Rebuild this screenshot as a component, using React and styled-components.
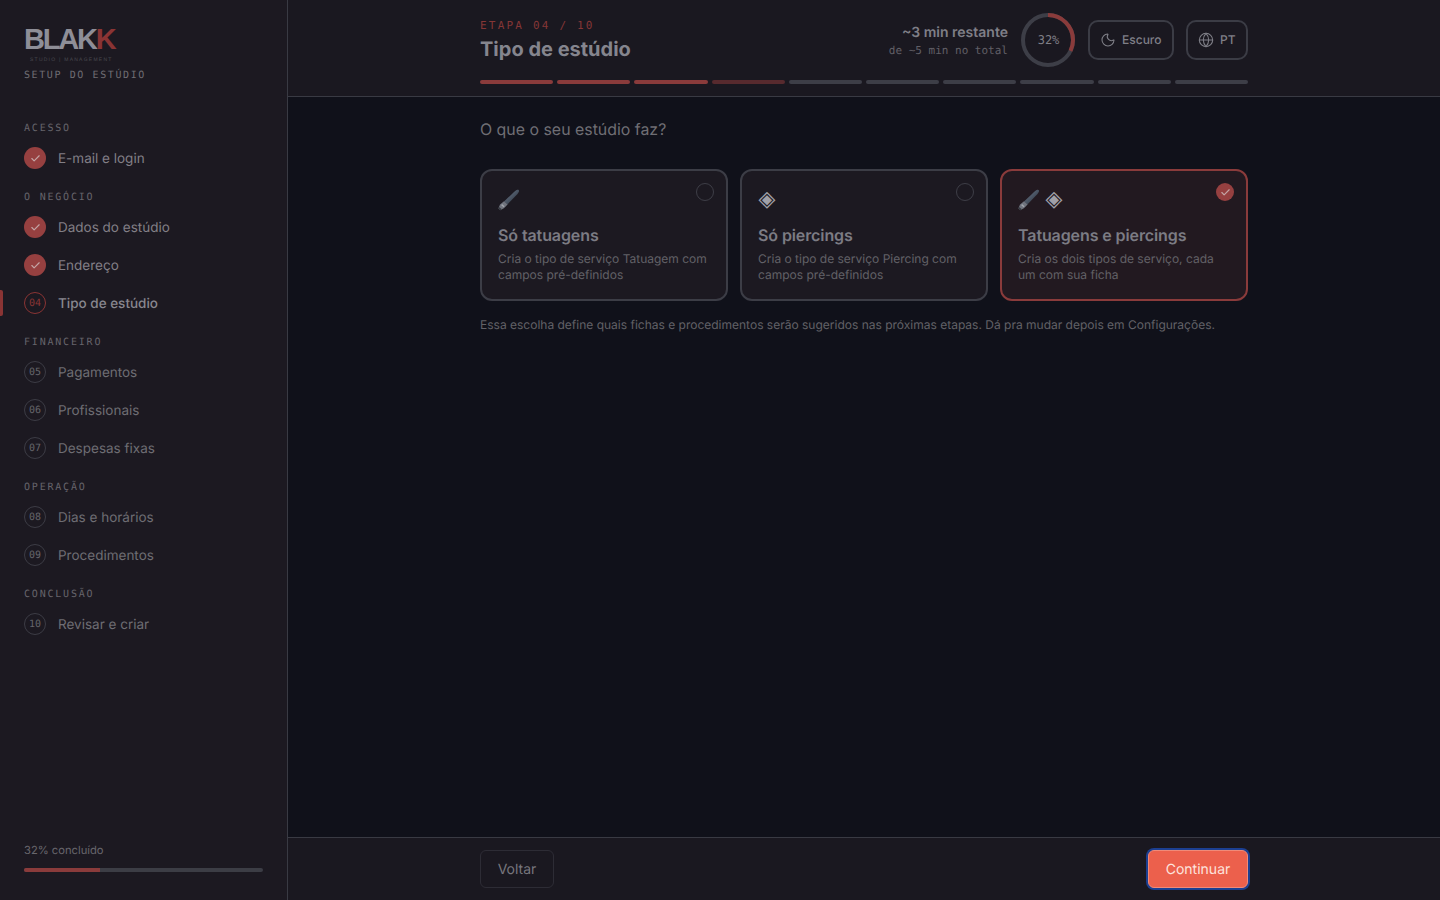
import React from "react";
import styled, { createGlobalStyle } from "styled-components";
import { Moon, Globe, Check } from "lucide-react";

const mono = `"DejaVu Sans Mono", "Liberation Mono", monospace`;

const GlobalStyle = createGlobalStyle`
  html, body { margin: 0; padding: 0; background: #10111a; }
  * { box-sizing: border-box; }
  body {
    font-family: Inter, "Noto Sans", sans-serif;
    text-rendering: geometricPrecision;
  }
`;

const Shell = styled.div`
  display: grid;
  grid-template-columns: 288px 1fr;
  height: 900px;
  overflow: hidden;
`;

const Sidebar = styled.aside`
  background: #1c1921;
  border-right: 1px solid #393a43;
  padding: 28px 24px 0;
  display: flex;
  flex-direction: column;
  height: 900px;
`;

const LogoMark = styled.div`
  font-family: "Liberation Sans", Arial, sans-serif;
  font-weight: 700;
  font-size: 29px;
  line-height: 24px;
  letter-spacing: -2.2px;
  color: #8e8e97;
  span { color: #8a3434; }
`;

const LogoSub = styled.div`
  font-family: "Liberation Sans", Arial, sans-serif;
  font-size: 5px;
  line-height: 6px;
  letter-spacing: 1.25px;
  color: #4a4950;
  margin: 5px 0 0 6px;
  white-space: nowrap;
`;

const SetupLabel = styled.div`
  font-family: ${mono};
  font-size: 10px;
  line-height: 14px;
  letter-spacing: 1.6px;
  color: #6f6d73;
  margin-top: 6px;
`;

const Nav = styled.nav`
  display: flex;
  flex-direction: column;
  margin-top: 39px;
`;

const SectionLabel = styled.div`
  font-family: ${mono};
  font-size: 10px;
  line-height: 14px;
  letter-spacing: 1.8px;
  color: #66646b;
  margin-bottom: 3px;
  margin-top: ${(p) => (p.$first ? "0" : "14px")};
`;

const NavItem = styled.div`
  position: relative;
  display: flex;
  align-items: center;
  gap: 12px;
  height: 38px;
  font-size: 13.5px;
  color: ${(p) => (p.$active ? "#88878f" : p.$done ? "#827f86" : "#6e6d73")};
  font-weight: ${(p) => (p.$active ? 500 : 400)};
  &::before {
    content: "";
    display: ${(p) => (p.$active ? "block" : "none")};
    position: absolute;
    left: -24px;
    top: 6px;
    width: 3px;
    height: 26px;
    border-radius: 0 2px 2px 0;
    background: #8a3434;
  }
`;

const NavLabel = styled.span`
  padding-top: 2px;
`;

const StepBadge = styled.span`
  width: 22px;
  height: 22px;
  border-radius: 50%;
  flex: none;
  display: flex;
  align-items: center;
  justify-content: center;
  font-family: ${mono};
  font-size: 10px;
  color: ${(p) => (p.$active ? "#8a3434" : "#66656b")};
  background: ${(p) => (p.$done ? "#964040" : "transparent")};
  border: ${(p) =>
    p.$done ? "none" : p.$active ? "1px solid #8a3434" : "1px solid #3c3c45"};
  svg { color: #c4a5a5; }
`;

const SideFooter = styled.div`
  margin-top: auto;
  padding-bottom: 28px;
`;

const ProgressLabel = styled.div`
  font-size: 11.2px;
  line-height: 16px;
  color: #68666c;
  margin-bottom: 10px;
`;

const ProgressTrack = styled.div`
  height: 4px;
  width: 239px;
  border-radius: 2px;
  background: #3c3d45;
  overflow: hidden;
`;

const ProgressFill = styled.div`
  height: 100%;
  background: #8a3b3b;
`;

const Main = styled.main`
  display: flex;
  flex-direction: column;
  height: 900px;
  min-width: 0;
`;

const Header = styled.header`
  background: #1a1820;
  border-bottom: 1px solid #393a43;
  height: 97px;
  flex: none;
`;

const Column = styled.div`
  width: 768px;
  margin: 0 auto;
`;

const HeaderRow = styled.div`
  display: flex;
  justify-content: space-between;
  align-items: flex-start;
  height: 80px;
`;

const TitleBlock = styled.div`
  padding-top: 19px;
`;

const Eyebrow = styled.div`
  font-family: ${mono};
  font-size: 11px;
  line-height: 14px;
  letter-spacing: 2.2px;
  color: #843636;
`;

const PageTitle = styled.h1`
  margin: 2px 0 0;
  font-size: 20px;
  line-height: 28px;
  font-weight: 700;
  color: #85858e;
`;

const HeaderTools = styled.div`
  display: flex;
  align-items: center;
  height: 54px;
  margin-top: 13px;
`;

const TimeBlock = styled.div`
  text-align: right;
  margin-right: 13px;
  padding-top: 2px;
`;

const TimeMain = styled.div`
  font-size: 14px;
  line-height: 20px;
  font-weight: 600;
  color: #7f7f87;
`;

const TimeSub = styled.div`
  font-family: ${mono};
  font-size: 11px;
  line-height: 16px;
  color: #615f66;
`;

const Ring = styled.div`
  position: relative;
  width: 54px;
  height: 54px;
  margin-right: 13px;
  svg { display: block; }
`;

const RingLabel = styled.span`
  position: absolute;
  inset: 0;
  display: flex;
  align-items: center;
  justify-content: center;
  padding-left: 1px;
  font-family: ${mono};
  font-size: 12px;
  color: #807f87;
`;

const ToolButton = styled.button`
  display: flex;
  align-items: center;
  gap: 6px;
  width: ${(p) => p.$width}px;
  height: 40px;
  padding: 0 10px 1px;
  margin-left: ${(p) => (p.$spaced ? "12px" : "0")};
  background: transparent;
  border: 2px solid #3b3c45;
  border-radius: 10px;
  font: 500 12px Inter, sans-serif;
  text-rendering: geometricPrecision;
  color: #7f7f87;
`;

const Steps = styled.div`
  display: flex;
  gap: 4px;
`;

const Step = styled.div`
  flex: 1;
  height: 4px;
  border-radius: 2px;
  background: ${(p) =>
    p.$state === "done" ? "#8a3b3b" : p.$state === "current" ? "#572a2e" : "#3d3e47"};
`;

const Content = styled.section`
  flex: 1;
  padding-top: 23px;
`;

const Question = styled.p`
  margin: 0;
  font-size: 15.9px;
  line-height: 20px;
  color: #6f6e74;
`;

const CardGrid = styled.div`
  display: grid;
  grid-template-columns: repeat(3, 1fr);
  gap: 12px;
  margin-top: 29px;
`;

const Card = styled.div`
  position: relative;
  height: 132px;
  padding: 17px 16px 0;
  border-radius: 12px;
  border: 2px solid ${(p) => (p.$selected ? "#8a3b3b" : "#3c3d46")};
  background: ${(p) => (p.$selected ? "#221920" : "#1c1921")};
`;

const IconRow = styled.div`
  display: flex;
  align-items: center;
  gap: 5px;
  height: 24px;
`;

const Diamond = styled.span`
  font-family: "DejaVu Sans", sans-serif;
  font-size: 22px;
  line-height: 24px;
  color: #a0a0a8;
  width: 18px;
  display: flex;
  justify-content: center;
`;

const CardTitle = styled.div`
  font-size: 16px;
  line-height: 22px;
  font-weight: 600;
  letter-spacing: -0.1px;
  color: #7c7c84;
  margin-top: 12px;
`;

const CardText = styled.div`
  font-size: 12px;
  line-height: 16px;
  color: #626167;
  margin-top: 5px;
`;

const Radio = styled.span`
  position: absolute;
  top: 12px;
  right: 12px;
  width: 18px;
  height: 18px;
  border-radius: 50%;
  display: flex;
  align-items: center;
  justify-content: center;
  border: ${(p) => (p.$selected ? "none" : "1px solid #3e3e47")};
  background: ${(p) => (p.$selected ? "#964040" : "transparent")};
  svg { color: #c4a5a5; }
`;

const Note = styled.p`
  margin: 15px 0 0;
  font-size: 12px;
  line-height: 18px;
  color: #626167;
`;

const Footer = styled.footer`
  flex: none;
  height: 63px;
  background: #1a1820;
  border-top: 1px solid #393a43;
`;

const FooterRow = styled.div`
  display: flex;
  justify-content: space-between;
  align-items: center;
  height: 62px;
`;

const BackButton = styled.button`
  height: 38px;
  width: 74px;
  background: transparent;
  border: 1px solid #2d2c35;
  border-radius: 6px;
  font: 400 14px Inter, sans-serif;
  text-rendering: geometricPrecision;
  color: #77767d;
`;

const NextButton = styled.button`
  height: 38px;
  width: 100px;
  background: #ec604c;
  border: 1px solid #f08a78;
  border-radius: 6px;
  box-shadow: 0 0 0 2px #1c3f91;
  font: 400 14px Inter, sans-serif;
  text-rendering: geometricPrecision;
  color: #fde3dd;
`;

function Brush() {
  return (
    <svg width="22" height="22" viewBox="0 0 22 22">
      <defs>
        <linearGradient id="brushBody" x1="0" y1="0" x2="1" y2="1">
          <stop offset="0" stopColor="#6f7a8a" />
          <stop offset="0.5" stopColor="#4a5564" />
          <stop offset="1" stopColor="#222833" />
        </linearGradient>
      </defs>
      <path
        d="M19.2.8C20.4.4 21.4 1.2 21 2.4 20.4 4 18.6 6 16.6 8L9.4 15.4 6 12.4 14 5C16 3 18 1.2 19.2.8Z"
        fill="url(#brushBody)"
      />
      <path d="M6 12.2 9.6 15.6 6.2 19 2.4 21.2 0.4 19.6 2 15.6Z" fill="#70747e" />
      <path d="M2.4 21.2 0.4 19.6 1 18 3.8 20.2Z" fill="#34383f" />
      <path d="M4 15 6.6 17.2 5.6 18.2 3.2 16.2Z" fill="#a2a5ac" />
    </svg>
  );
}

const nav = [
  { title: "ACESSO", items: [{ n: "01", label: "E-mail e login", done: true }] },
  {
    title: "O NEGÓCIO",
    items: [
      { n: "02", label: "Dados do estúdio", done: true },
      { n: "03", label: "Endereço", done: true },
      { n: "04", label: "Tipo de estúdio", active: true },
    ],
  },
  {
    title: "FINANCEIRO",
    items: [
      { n: "05", label: "Pagamentos" },
      { n: "06", label: "Profissionais" },
      { n: "07", label: "Despesas fixas" },
    ],
  },
  {
    title: "OPERAÇÃO",
    items: [
      { n: "08", label: "Dias e horários" },
      { n: "09", label: "Procedimentos" },
    ],
  },
  { title: "CONCLUSÃO", items: [{ n: "10", label: "Revisar e criar" }] },
];

const cards = [
  {
    title: "Só tatuagens",
    text: "Cria o tipo de serviço Tatuagem com campos pré-definidos",
    brush: true,
  },
  {
    title: "Só piercings",
    text: "Cria o tipo de serviço Piercing com campos pré-definidos",
    diamond: true,
  },
  {
    title: "Tatuagens e piercings",
    text: "Cria os dois tipos de serviço, cada um com sua ficha",
    brush: true,
    diamond: true,
    selected: true,
  },
];

const stepStates = ["done", "done", "done", "current", "", "", "", "", "", ""];

export default function App() {
  const r = 25;
  const circ = 2 * Math.PI * r;
  return (
    <>
      <GlobalStyle />
      <Shell>
        <Sidebar>
          <LogoMark>
            BLAK<span>K</span>
          </LogoMark>
          <LogoSub>STUDIO | MANAGEMENT</LogoSub>
          <SetupLabel>SETUP DO ESTÚDIO</SetupLabel>
          <Nav>
            {nav.map((section, i) => (
              <div key={section.title}>
                <SectionLabel $first={i === 0}>{section.title}</SectionLabel>
                {section.items.map((item) => (
                  <NavItem key={item.n} $active={item.active} $done={item.done}>
                    <StepBadge $active={item.active} $done={item.done}>
                      {item.done ? <Check size={11} strokeWidth={2.5} /> : item.n}
                    </StepBadge>
                    <NavLabel>{item.label}</NavLabel>
                  </NavItem>
                ))}
              </div>
            ))}
          </Nav>
          <SideFooter>
            <ProgressLabel>32% concluído</ProgressLabel>
            <ProgressTrack>
              <ProgressFill style={{ width: "32%" }} />
            </ProgressTrack>
          </SideFooter>
        </Sidebar>
        <Main>
          <Header>
            <Column>
              <HeaderRow>
                <TitleBlock>
                  <Eyebrow>ETAPA 04 / 10</Eyebrow>
                  <PageTitle>Tipo de estúdio</PageTitle>
                </TitleBlock>
                <HeaderTools>
                  <TimeBlock>
                    <TimeMain>~3 min restante</TimeMain>
                    <TimeSub>de ~5 min no total</TimeSub>
                  </TimeBlock>
                  <Ring>
                    <svg width="54" height="54" viewBox="0 0 54 54">
                      <circle cx="27" cy="27" r={r} fill="none" stroke="#3d3e47" strokeWidth="4" />
                      <circle
                        cx="27"
                        cy="27"
                        r={r}
                        fill="none"
                        stroke="#8a3b3b"
                        strokeWidth="4"
                        strokeDasharray={`${circ * 0.32} ${circ}`}
                        transform="rotate(-90 27 27)"
                      />
                    </svg>
                    <RingLabel>32%</RingLabel>
                  </Ring>
                  <ToolButton $width={86}>
                    <Moon size={16} strokeWidth={1.6} />
                    Escuro
                  </ToolButton>
                  <ToolButton $width={62} $spaced>
                    <Globe size={16} strokeWidth={1.6} />
                    PT
                  </ToolButton>
                </HeaderTools>
              </HeaderRow>
              <Steps>
                {stepStates.map((s, i) => (
                  <Step key={i} $state={s} />
                ))}
              </Steps>
            </Column>
          </Header>
          <Content>
            <Column>
              <Question>O que o seu estúdio faz?</Question>
              <CardGrid>
                {cards.map((card) => (
                  <Card key={card.title} $selected={card.selected}>
                    <Radio $selected={card.selected}>
                      {card.selected && <Check size={11} strokeWidth={2.5} />}
                    </Radio>
                    <IconRow>
                      {card.brush && <Brush />}
                      {card.diamond && <Diamond>◈</Diamond>}
                    </IconRow>
                    <CardTitle>{card.title}</CardTitle>
                    <CardText>{card.text}</CardText>
                  </Card>
                ))}
              </CardGrid>
              <Note>
                Essa escolha define quais fichas e procedimentos serão sugeridos nas próximas etapas. Dá pra mudar depois em Configurações.
              </Note>
            </Column>
          </Content>
          <Footer>
            <Column>
              <FooterRow>
                <BackButton>Voltar</BackButton>
                <NextButton>Continuar</NextButton>
              </FooterRow>
            </Column>
          </Footer>
        </Main>
      </Shell>
    </>
  );
}
